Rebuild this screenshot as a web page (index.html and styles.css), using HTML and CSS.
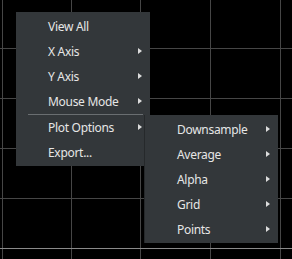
FILE: index.html
```html
<!DOCTYPE html>
<html lang="en">
<head>
    <meta charset="UTF-8">
    <title>Plot context menu</title>
    <link rel="stylesheet" href="styles.css">
</head>
<body>

<div class="plot">
    <!-- grille du graphe -->
    <svg class="grid" width="292" height="259" viewBox="0 0 292 259">
        <g stroke="#464646" stroke-width="1">
            <line x1="2.5" y1="0" x2="2.5" y2="259" />
            <line x1="71.5" y1="0" x2="71.5" y2="259" />
            <line x1="140.5" y1="0" x2="140.5" y2="259" />
            <line x1="210.5" y1="0" x2="210.5" y2="259" />
            <line x1="280.5" y1="0" x2="280.5" y2="259" />
            <line x1="0" y1="48.5" x2="292" y2="48.5" />
            <line x1="0" y1="98.5" x2="292" y2="98.5" />
            <line x1="0" y1="148.5" x2="292" y2="148.5" />
            <line x1="0" y1="198.5" x2="292" y2="198.5" />
        </g>
        <line x1="0" y1="248.5" x2="292" y2="248.5" stroke="#8a8a8a" />
    </svg>

    <ul class="menu menu-main">
        <li class="item">View All</li>
        <li class="item has-sub">X Axis</li>
        <li class="item has-sub">Y Axis</li>
        <li class="item has-sub">Mouse Mode</li>
        <li class="separator"></li>
        <li class="item has-sub">Plot Options</li>
        <li class="item">Export...</li>
    </ul>

    <ul class="menu menu-sub">
        <li class="item has-sub">Downsample</li>
        <li class="item has-sub">Average</li>
        <li class="item has-sub">Alpha</li>
        <li class="item has-sub">Grid</li>
        <li class="item has-sub">Points</li>
    </ul>
</div>

</body>
</html>
```

FILE: styles.css
```css
body {
    margin: 0;
    background: #000;
    font-family: "Noto Sans", "DejaVu Sans", sans-serif;
    font-size: 12px;
    color: #e6e6e6;
}

.plot {
    position: relative;
    width: 292px;
    height: 259px;
    overflow: hidden;
}

.grid {
    display: block;
}

/* Menus contextuels */
.menu {
    position: absolute;
    margin: 0;
    padding: 2px 0 1px;
    list-style: none;
    background: #33373a;
}

.menu-main {
    left: 16px;
    top: 12px;
    width: 134px;
}

.menu-sub {
    left: 145px;
    top: 115px;
    width: 133px;
    box-shadow: -1px 0 0 #26292b;
}

.item {
    position: relative;
    height: 25px;
    line-height: 26px;
    padding-left: 32px;
    letter-spacing: -0.3px;
    white-space: nowrap;
}

.has-sub::after {
    content: "";
    position: absolute;
    right: 8px;
    top: 9px;
    border-left: 4px solid #dcdcdc;
    border-top: 3.5px solid transparent;
    border-bottom: 3.5px solid transparent;
}

.separator {
    height: 1px;
    margin: 0 7px 0 12px;
    background: #6a6e71;
}
```
